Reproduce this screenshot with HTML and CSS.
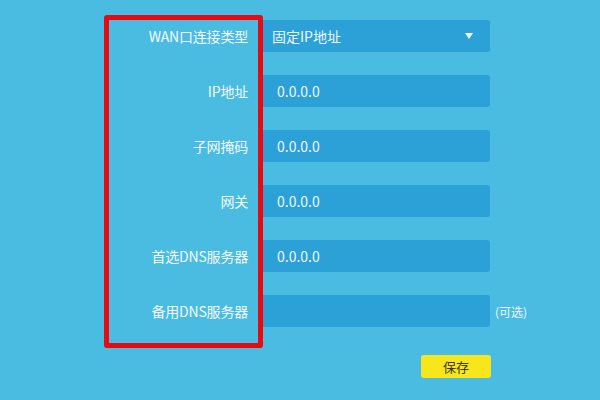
FILE: index.html
```html
<!DOCTYPE html>
<html lang="zh-CN">
<head>
<meta charset="utf-8">
<link rel="stylesheet" href="styles.css">
</head>
<body>
<div class="page">
  <form class="form">
    <div class="row">
      <label class="label">WAN口连接类型</label>
      <div class="field select"><span>固定IP地址</span><span class="arrow"></span></div>
    </div>
    <div class="row">
      <label class="label">IP地址</label>
      <div class="field">0.0.0.0</div>
    </div>
    <div class="row">
      <label class="label">子网掩码</label>
      <div class="field">0.0.0.0</div>
    </div>
    <div class="row">
      <label class="label">网关</label>
      <div class="field">0.0.0.0</div>
    </div>
    <div class="row">
      <label class="label">首选DNS服务器</label>
      <div class="field">0.0.0.0</div>
    </div>
    <div class="row">
      <label class="label">备用DNS服务器</label>
      <div class="field"></div>
      <span class="hint">(可选)</span>
    </div>
    <div class="actions">
      <button type="button" class="save">保存</button>
    </div>
  </form>
  <div class="highlight"></div>
</div>
</body>
</html>
```
FILE: styles.css
```css
html, body {
  margin: 0;
  padding: 0;
}
body {
  width: 600px;
  height: 400px;
  background: #4bbce1;
  font-family: "Noto Sans CJK SC", "Open Sans", sans-serif;
  overflow: hidden;
}
.page {
  position: relative;
  width: 600px;
  height: 400px;
}
.form {
  display: flex;
  flex-direction: column;
  gap: 23px;
  padding-top: 20px;
}
.row {
  display: flex;
  align-items: center;
  height: 32px;
}
.label {
  width: 263px;
  padding-right: 15px;
  box-sizing: border-box;
  text-align: right;
  color: #f2f9fd;
  font-size: 14px;
  letter-spacing: -0.2px;
}
.field {
  width: 227px;
  height: 32px;
  box-sizing: border-box;
  background: #2ba1d8;
  border-radius: 0 3px 3px 0;
  color: #eef7fc;
  font-size: 14px;
  line-height: 32px;
  padding-left: 14px;
}
.select {
  display: flex;
  align-items: center;
  justify-content: space-between;
  padding-left: 9px;
  padding-right: 17px;
  font-size: 14px;
}
.arrow {
  width: 0;
  height: 0;
  border-left: 4px solid transparent;
  border-right: 4px solid transparent;
  border-top: 6px solid #f4fafd;
}
.hint {
  margin-left: 5px;
  color: #eef7fc;
  font-size: 12px;
}
.actions {
  display: flex;
  padding-left: 421px;
  margin-top: 5px;
}
.save {
  width: 70px;
  height: 23px;
  border: none;
  border-radius: 3px;
  background: #f8e61c;
  color: #3a3a20;
  font-family: "Noto Sans CJK SC", sans-serif;
  font-size: 13px;
  padding: 0;
}
.highlight {
  position: absolute;
  left: 104px;
  top: 15px;
  width: 159px;
  height: 333px;
  box-sizing: border-box;
  border: 5px solid #e80a10;
  border-radius: 3px;
}
```
